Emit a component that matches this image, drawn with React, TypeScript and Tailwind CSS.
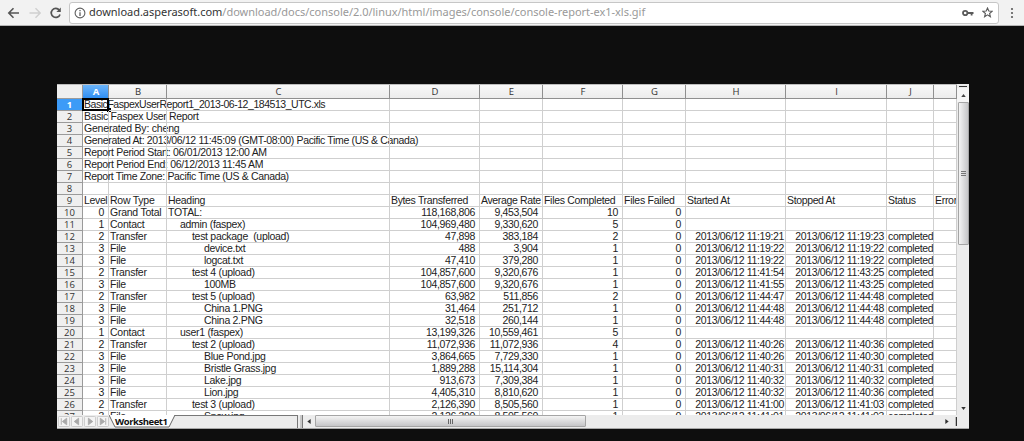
import React from "react";

type Row = string[];

const columns = [
  { id: "A", width: "w-[26px]", cell: "pr-[4px] tracking-[-0.35px]" },
  { id: "B", width: "w-[58px]", cell: "tracking-[-0.25px]" },
  { id: "C", width: "w-[223px]", cell: "tracking-[-0.3px]" },
  { id: "D", width: "w-[90px]", cell: "pr-[4px] tracking-[-0.35px]" },
  { id: "E", width: "w-[63px]", cell: "pr-[4px] tracking-[-0.35px]" },
  { id: "F", width: "w-[80px]", cell: "pr-[4px] tracking-[-0.3px]" },
  { id: "G", width: "w-[63px]", cell: "pr-[4px] tracking-[-0.25px]" },
  { id: "H", width: "w-[100px]", cell: "pr-[1px] tracking-[-0.36px]" },
  { id: "I", width: "w-[101px]", cell: "pr-[2px] tracking-[-0.36px]" },
  { id: "J", width: "w-[47px]", cell: "tracking-[-0.35px]" },
  { id: "", width: "w-[23px]", cell: "overflow-hidden tracking-[-0.3px]" },
];

const D = "2013/06/12 ";

const rows: Row[] = [
  ["BasicFaspexUserReport1_2013-06-12_184513_UTC.xls"],
  ["Basic Faspex User Report"],
  ["Generated By: cheng"],
  ["Generated At: 2013/06/12 11:45:09 (GMT-08:00) Pacific Time (US & Canada)"],
  ["Report Period Start: 06/01/2013 12:00 AM"],
  ["Report Period End: 06/12/2013 11:45 AM"],
  ["Report Time Zone: Pacific Time (US & Canada)"],
  [],
  ["Level", "Row Type", "Heading", "Bytes Transferred", "Average Rate", "Files Completed", "Files Failed", "Started At", "Stopped At", "Status", "Error"],
  ["0", "Grand Total", "TOTAL:", "118,168,806", "9,453,504", "10", "0"],
  ["1", "Contact", "admin (faspex)", "104,969,480", "9,330,620", "5", "0"],
  ["2", "Transfer", "test package  (upload)", "47,898", "383,184", "2", "0", D + "11:19:21", D + "11:19:23", "completed"],
  ["3", "File", "device.txt", "488", "3,904", "1", "0", D + "11:19:22", D + "11:19:22", "completed"],
  ["3", "File", "logcat.txt", "47,410", "379,280", "1", "0", D + "11:19:22", D + "11:19:22", "completed"],
  ["2", "Transfer", "test 4 (upload)", "104,857,600", "9,320,676", "1", "0", D + "11:41:54", D + "11:43:25", "completed"],
  ["3", "File", "100MB", "104,857,600", "9,320,676", "1", "0", D + "11:41:55", D + "11:43:25", "completed"],
  ["2", "Transfer", "test 5 (upload)", "63,982", "511,856", "2", "0", D + "11:44:47", D + "11:44:48", "completed"],
  ["3", "File", "China 1.PNG", "31,464", "251,712", "1", "0", D + "11:44:48", D + "11:44:48", "completed"],
  ["3", "File", "China 2.PNG", "32,518", "260,144", "1", "0", D + "11:44:48", D + "11:44:48", "completed"],
  ["1", "Contact", "user1 (faspex)", "13,199,326", "10,559,461", "5", "0"],
  ["2", "Transfer", "test 2 (upload)", "11,072,936", "11,072,936", "4", "0", D + "11:40:26", D + "11:40:36", "completed"],
  ["3", "File", "Blue Pond.jpg", "3,864,665", "7,729,330", "1", "0", D + "11:40:26", D + "11:40:30", "completed"],
  ["3", "File", "Bristle Grass.jpg", "1,889,288", "15,114,304", "1", "0", D + "11:40:31", D + "11:40:31", "completed"],
  ["3", "File", "Lake.jpg", "913,673", "7,309,384", "1", "0", D + "11:40:32", D + "11:40:32", "completed"],
  ["3", "File", "Lion.jpg", "4,405,310", "8,810,620", "1", "0", D + "11:40:32", D + "11:40:36", "completed"],
  ["2", "Transfer", "test 3 (upload)", "2,126,390", "8,505,560", "1", "0", D + "11:41:00", D + "11:41:03", "completed"],
  ["3", "File", "Snow.jpg", "2,126,390", "8,505,560", "1", "0", D + "11:41:01", D + "11:41:03", "completed"],
];

const indents = ["pl-[1px]", "pl-[13px]", "pl-[25px]", "pl-[37px]"];
const reportTracking = [
  "tracking-[-0.46px]", "tracking-[-0.33px]", "tracking-[-0.2px]", "tracking-[-0.35px]",
  "tracking-[-0.32px]", "tracking-[-0.32px]", "tracking-[-0.36px]",
];

function alignment(row: Row, r: number, c: number) {
  const numeric = r > 8 && c !== 1 && c !== 2 && c !== 9;
  if (numeric) return "justify-end";
  if (c === 2 && r > 8) return "justify-start " + indents[Number(row[0])];
  return "justify-start pl-[1px]";
}

function SheetRow({ row, r }: { row: Row; r: number }) {
  return (
    <div className="flex h-[12.03px] shrink-0">
      <div
        className={
          "flex w-[26px] shrink-0 items-center justify-center border-r border-b border-[#9a9a9a] font-['Open_Sans',sans-serif] text-[9.5px] leading-none " +
          (r === 0 ? "bg-[#3d9bf7] font-bold text-white" : "bg-[#efefef] text-[#333]")
        }
      >
        {r + 1}
      </div>
      {columns.map((col, c) => (
        <div
          key={c}
          className={
            "relative flex shrink-0 items-center border-r border-b border-[#cfcfcf] leading-[11px] whitespace-pre " +
            col.width + " " + col.cell + " " + alignment(row, r, c)
          }
        >
          <span className={r < 7 ? reportTracking[r] : ""}>{row[c] ?? ""}</span>
          {r === 0 && c === 0 && (
            <>
              <span className="absolute -top-px -left-px h-[13px] w-[27px] border-2 border-black" />
              <span className="absolute top-[9px] left-[24px] size-[4px] bg-black" />
            </>
          )}
        </div>
      ))}
    </div>
  );
}

function Toolbar() {
  return (
    <div className="flex h-[26px] items-center border-b border-[#b5b5b5] bg-[#f2f2f2]">
      <svg className="ml-[7px] h-[12px] w-[13px]" viewBox="0 0 13 12" fill="none" stroke="#555" strokeWidth="1.6">
        <path d="M12 6H2M6.5 1.3L1.8 6l4.7 4.7" />
      </svg>
      <svg className="ml-[9px] h-[12px] w-[13px]" viewBox="0 0 13 12" fill="none" stroke="#cfcfcf" strokeWidth="1.4">
        <path d="M0.5 6H10.5M6.5 1.3L11.2 6l-4.7 4.7" />
      </svg>
      <svg className="ml-[7px] h-[12px] w-[13px]" viewBox="0 0 13 12" fill="none" stroke="#555" strokeWidth="1.7">
        <path d="M10.3 3.2A4.5 4.5 0 1 0 11 7.4" />
        <path d="M11.8 0.6V5H7.4z" fill="#555" stroke="none" />
      </svg>
      <div className="ml-[7px] flex h-[22px] w-[930px] shrink-0 items-center rounded-[3px] border border-[#c6c6c6] bg-white">
        <svg className="ml-[4px] size-[12px] shrink-0" viewBox="0 0 12 12" fill="none" stroke="#5f5f5f" strokeWidth="1.1">
          <circle cx="6" cy="6" r="4.9" />
          <path d="M6 5.2V9M6 2.9V4.2" strokeWidth="1.3" />
        </svg>
        <span className="-mt-px ml-[3px] w-[860px] font-['Noto_Sans',sans-serif] text-[11px] leading-[18px] tracking-[-0.02px] whitespace-nowrap text-[#999]">
          <span className="text-[#333]">download.asperasoft.com</span>
          /download/docs/console/2.0/linux/html/images/console/console-report-ex1-xls.gif
        </span>
        <svg className="ml-auto h-[8px] w-[12px] shrink-0" viewBox="0 0 12 8" fill="none" stroke="#5a5a5a">
          <circle cx="3.2" cy="4" r="2.2" strokeWidth="1.8" />
          <path d="M5.5 4H11.5M9.6 4V6.6" strokeWidth="1.8" />
        </svg>
        <svg className="mr-[5px] ml-[8px] size-[11px] shrink-0" viewBox="0 0 11 11" fill="none" stroke="#5a5a5a" strokeWidth="1.1">
          <path d="M5.5 1l1.3 3 3.3.3-2.5 2.2.8 3.2-2.9-1.8-2.9 1.8.8-3.2L.9 4.3 4.2 4z" />
        </svg>
      </div>
      <svg className="ml-[11px] h-[12px] w-[4px]" viewBox="0 0 4 12" fill="#5a5a5a">
        <circle cx="2" cy="2" r="1.1" /><circle cx="2" cy="6" r="1.1" /><circle cx="2" cy="10" r="1.1" />
      </svg>
    </div>
  );
}

function VerticalScrollbar() {
  return (
    <div className="flex w-[12px] shrink-0 flex-col items-center bg-[#ececec]">
      <div className="mt-[2px] h-px w-[8px] bg-[#333]" />
      <div className="mt-px flex h-[14px] w-full items-center justify-center bg-[#f5f5f5]">
        <svg className="h-[3px] w-[5px]" viewBox="0 0 6 4" fill="#444"><path d="M3 0l3 4H0z" /></svg>
      </div>
      <div className="flex h-[143px] w-[11px] items-center justify-center rounded-[1px] border border-[#a5a5a5] bg-linear-to-r from-[#f4f4f4] to-[#c6c6c8]">
        <div className="flex flex-col gap-px">
          <div className="h-px w-[5px] bg-[#777]" />
          <div className="h-px w-[5px] bg-[#777]" />
          <div className="h-px w-[5px] bg-[#777]" />
        </div>
      </div>
      <svg className="mt-auto mb-[5px] h-[3px] w-[5px]" viewBox="0 0 6 4" fill="#333"><path d="M3 4L0 0h6z" /></svg>
    </div>
  );
}

const navIcons = ["M3 2v6M8 2v6L4 5z", "M7 2v6L3 5z", "M4 2v6l4-3z", "M3 2v6l4-3zM8 2v6"];

function BottomBar() {
  return (
    <div className="flex h-[14px] shrink-0 border-b border-[#a8a8a8] bg-[#ececec]">
      <div className="flex w-[52px] shrink-0 items-center gap-px pl-px">
        {navIcons.map((d) => (
          <svg key={d} className="h-[11px] w-[12px]" viewBox="0 0 11 10" fill="#a9a9a9" stroke="#a9a9a9" strokeWidth="0.8">
            <rect x="0.4" y="0.4" width="10.2" height="9.2" rx="1" fill="#f4f4f4" stroke="#c4c4c4" />
            <path d={d} />
          </svg>
        ))}
      </div>
      <div className="relative flex w-[189px] shrink-0 border-t border-r border-[#777] bg-[#ececec]">
        <svg className="absolute -top-px left-0 h-[13px] w-[68px]" viewBox="0 0 68 13">
          <path d="M0 0L6 12H60L66 0" fill="#fff" stroke="#666" />
        </svg>
        <span className="relative ml-[6px] font-['Open_Sans',sans-serif] text-[9.5px] leading-[11px] font-bold tracking-[-0.45px] text-[#111]">Worksheet1</span>
      </div>
      <div className="ml-[2px] w-[3px] shrink-0 border-r border-[#777] bg-[#c8c8c8]" />
      <div className="flex w-[12px] shrink-0 items-center justify-center">
        <svg className="h-[5px] w-[4px]" viewBox="0 0 4 6" fill="#333"><path d="M0 3l4-3v6z" /></svg>
      </div>
      <div className="flex h-[12px] w-[271px] shrink-0 items-center justify-center gap-px rounded-[1px] border border-[#a5a5a5] bg-linear-to-b from-[#f4f4f4] to-[#c6c6c8]">
        <div className="h-[5px] w-px bg-[#666]" />
        <div className="h-[5px] w-px bg-[#666]" />
        <div className="h-[5px] w-px bg-[#666]" />
      </div>
      <svg className="mt-[4px] ml-auto h-[5px] w-[4px]" viewBox="0 0 4 6" fill="#333"><path d="M4 3L0 0v6z" /></svg>
      <div className="mt-[2px] mr-[12px] ml-[6px] h-[9px] w-[2px] border-r border-[#333] bg-[#bbb]" />
    </div>
  );
}

export default function App() {
  return (
    <div className="h-[441px] w-[1024px] overflow-hidden bg-[#0e0e0e]">
      <Toolbar />
      <div className="mt-[58px] ml-[57px] flex h-[345px] w-[912px] flex-col overflow-hidden bg-white">
        <div className="flex h-[331px] shrink-0">
          <div className="flex w-[900px] shrink-0 flex-col overflow-hidden font-['Liberation_Sans',Arial,sans-serif] text-[10.5px] text-[#222]">
            <div className="flex h-[15px] shrink-0 border-t border-[#bdbdbd] font-['Open_Sans',sans-serif] text-[9.5px] text-[#333]">
              <div className="w-[26px] shrink-0 border-r border-b border-[#9a9a9a] bg-[#efefef]" />
              {columns.map((col, c) => (
                <div
                  key={c}
                  className={
                    "flex shrink-0 items-center justify-center border-r border-b border-[#8f8f8f] pl-px leading-none " + col.width + " " +
                    (c === 0 ? "bg-linear-to-b from-[#6bb5fb] to-[#2e8ef2] font-bold text-white" : "bg-linear-to-b from-[#f8f8f8] to-[#ececec]")
                  }
                >
                  {col.id}
                </div>
              ))}
            </div>
            {rows.map((row, r) => (
              <SheetRow key={r} row={row} r={r} />
            ))}
          </div>
          <VerticalScrollbar />
        </div>
        <BottomBar />
      </div>
    </div>
  );
}
